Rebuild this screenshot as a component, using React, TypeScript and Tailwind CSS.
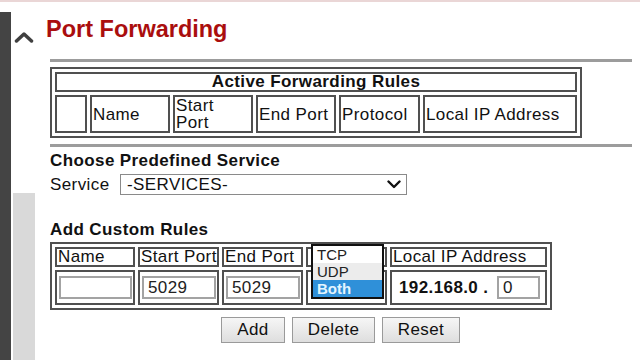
const activeCols = [
  { label: "", w: "w-[32px]" },
  { label: "Name", w: "w-[80px]" },
  { label: "Start Port", w: "w-[80px]" },
  { label: "End Port", w: "w-[80px]" },
  { label: "Protocol", w: "w-[81px]" },
  { label: "Local IP Address", w: "w-[154px]" },
];

const customCols = [
  { label: "Name", w: "w-[80px]" },
  { label: "Start Port", w: "w-[81px]" },
  { label: "End Port", w: "w-[81px]" },
  { label: "", w: "w-[81px]" },
  { label: "Local IP Address", w: "w-[157px]" },
];

function Chevron() {
  return (
    <svg width="20" height="12" viewBox="0 0 20 12" aria-hidden="true">
      <polyline
        points="2.5,10 10,3 17.5,10"
        fill="none"
        stroke="#404040"
        strokeWidth="3.5"
        strokeLinecap="round"
        strokeLinejoin="round"
      />
    </svg>
  );
}

function FieldBox({ value, className }: { value: string; className: string }) {
  return (
    <div
      className={`h-[23px] border-2 border-[#a3a3a3] bg-white pl-[4px] text-[17px] leading-[19px] text-[#222] ${className}`}
    >
      {value}
    </div>
  );
}

export default function App() {
  return (
    <div className="w-[640px] h-[360px] overflow-hidden bg-white flex flex-col font-['Liberation_Sans',Arial,sans-serif] text-[#111] tracking-[0.4px]">
      {/* top strip */}
      <div className="h-[2px] bg-[#ead6d6] shrink-0" />

      <div className="flex flex-1 min-h-0">
        {/* Sidebar */}
        <div className="w-[11px] mt-[10px] bg-[#444444] shrink-0" />
        <div className="w-[22px] ml-[2px] flex flex-col shrink-0">
          <div className="h-[29px]" />
          <div className="flex justify-center -ml-[1px]">
            <Chevron />
          </div>
          <div className="h-[150px]" />
          <div className="flex-1 bg-[#d9d9d9]" />
        </div>

        {/* Main content */}
        <div className="flex-1 pl-[11px] pr-[8px]">
          <h1 className="mt-[13px] text-[23.5px] leading-[28px] font-bold text-[#aa0e0e] tracking-normal">
            Port Forwarding
          </h1>

          <div className="ml-[4px]">
            <div className="mt-[16px] h-[3px] bg-[#9c9c9c]" />

            {/* Active Forwarding Rules */}
            <table className="mt-[5px] w-[532px] table-fixed border-separate border-spacing-[3px] border-2 border-[#505050] text-[17px]">
              <colgroup>
                {activeCols.map((c, i) => (
                  <col key={i} className={c.w} />
                ))}
              </colgroup>
              <tbody>
                <tr>
                  <td
                    colSpan={6}
                    className="h-[20px] border-2 border-[#505050] text-center font-bold leading-[16px] p-0"
                  >
                    Active Forwarding Rules
                  </td>
                </tr>
                <tr>
                  {activeCols.map((c, i) => (
                    <td
                      key={i}
                      className="h-[38px] border-2 border-[#505050] px-[1px] py-0 align-middle leading-[17px] whitespace-nowrap"
                    >
                      {c.label === "Start Port" ? (
                        <>
                          Start
                          <br />
                          Port
                        </>
                      ) : (
                        c.label
                      )}
                    </td>
                  ))}
                </tr>
              </tbody>
            </table>

            <div className="mt-[6px] h-[3px] bg-[#9c9c9c]" />

            {/* Predefined service */}
            <div className="mt-[4px] text-[17px] leading-[20px] font-bold">
              Choose Predefined Service
            </div>
            <div className="mt-[3px] flex items-center h-[21px] text-[17px]">
              <span className="w-[70px]">Service</span>
              <div className="w-[287px] h-[21px] border border-[#8a8a8a] flex items-center justify-between pl-[6px] pr-[5px]">
                <span className="leading-[19px]">-SERVICES-</span>
                <svg width="14" height="9" viewBox="0 0 14 9" aria-hidden="true">
                  <polyline
                    points="1.5,1.5 7,7 12.5,1.5"
                    fill="none"
                    stroke="#111"
                    strokeWidth="2.4"
                    strokeLinecap="round"
                    strokeLinejoin="round"
                  />
                </svg>
              </div>
            </div>

            {/* Custom rules */}
            <div className="mt-[25px] text-[17px] leading-[20px] font-bold">
              Add Custom Rules
            </div>

            <div className="relative mt-[2px] w-[502px]">
              <table className="w-[502px] table-fixed border-separate border-spacing-[3px] border-2 border-[#505050] text-[17px]">
                <colgroup>
                  {customCols.map((c, i) => (
                    <col key={i} className={c.w} />
                  ))}
                </colgroup>
                <tbody>
                  <tr>
                    {customCols.map((c, i) => (
                      <td
                        key={i}
                        className="h-[20px] border-2 border-[#505050] px-[1px] py-0 leading-[16px] whitespace-nowrap overflow-hidden"
                      >
                        {c.label}
                      </td>
                    ))}
                  </tr>
                  <tr>
                    <td className="h-[35px] border-2 border-[#505050] px-[2px] py-0">
                      <FieldBox value="" className="w-[73px]" />
                    </td>
                    <td className="h-[35px] border-2 border-[#505050] px-[2px] py-0">
                      <FieldBox value="5029" className="w-[74px]" />
                    </td>
                    <td className="h-[35px] border-2 border-[#505050] px-[2px] py-0">
                      <FieldBox value="5029" className="w-[74px]" />
                    </td>
                    <td className="h-[35px] border-2 border-[#505050] p-0" />
                    <td className="h-[35px] border-2 border-[#505050] py-0 pl-[7px] pr-0">
                      <div className="flex items-center">
                        <span className="font-bold w-[98px] whitespace-nowrap">192.168.0 .</span>
                        <FieldBox value="0" className="w-[43px]" />
                      </div>
                    </td>
                  </tr>
                </tbody>
              </table>

              {/* Open protocol list */}
              <div className="absolute left-[261px] top-[2px] w-[73px] border-2 border-[#111] bg-white text-[15px] leading-[17px] tracking-normal">
                <div className="pl-[4px] text-[#222]">TCP</div>
                <div className="pl-[4px] bg-[#ececec] text-[#222]">UDP</div>
                <div className="pl-[4px] bg-[#2f90d9] text-[#e4f5ff] font-bold">Both</div>
              </div>
            </div>

            {/* Buttons */}
            <div className="mt-[7px] ml-[171px] flex gap-[7px] text-[17px]">
              <button className="w-[64px] h-[26px] border border-[#9a9a9a] bg-gradient-to-b from-[#f6f6f6] to-[#dedede] leading-[20px]">
                Add
              </button>
              <button className="w-[83px] h-[26px] border border-[#9a9a9a] bg-gradient-to-b from-[#f6f6f6] to-[#dedede] leading-[20px]">
                Delete
              </button>
              <button className="w-[78px] h-[26px] border border-[#9a9a9a] bg-gradient-to-b from-[#f6f6f6] to-[#dedede] leading-[20px]">
                Reset
              </button>
            </div>
          </div>
        </div>
      </div>
    </div>
  );
}
